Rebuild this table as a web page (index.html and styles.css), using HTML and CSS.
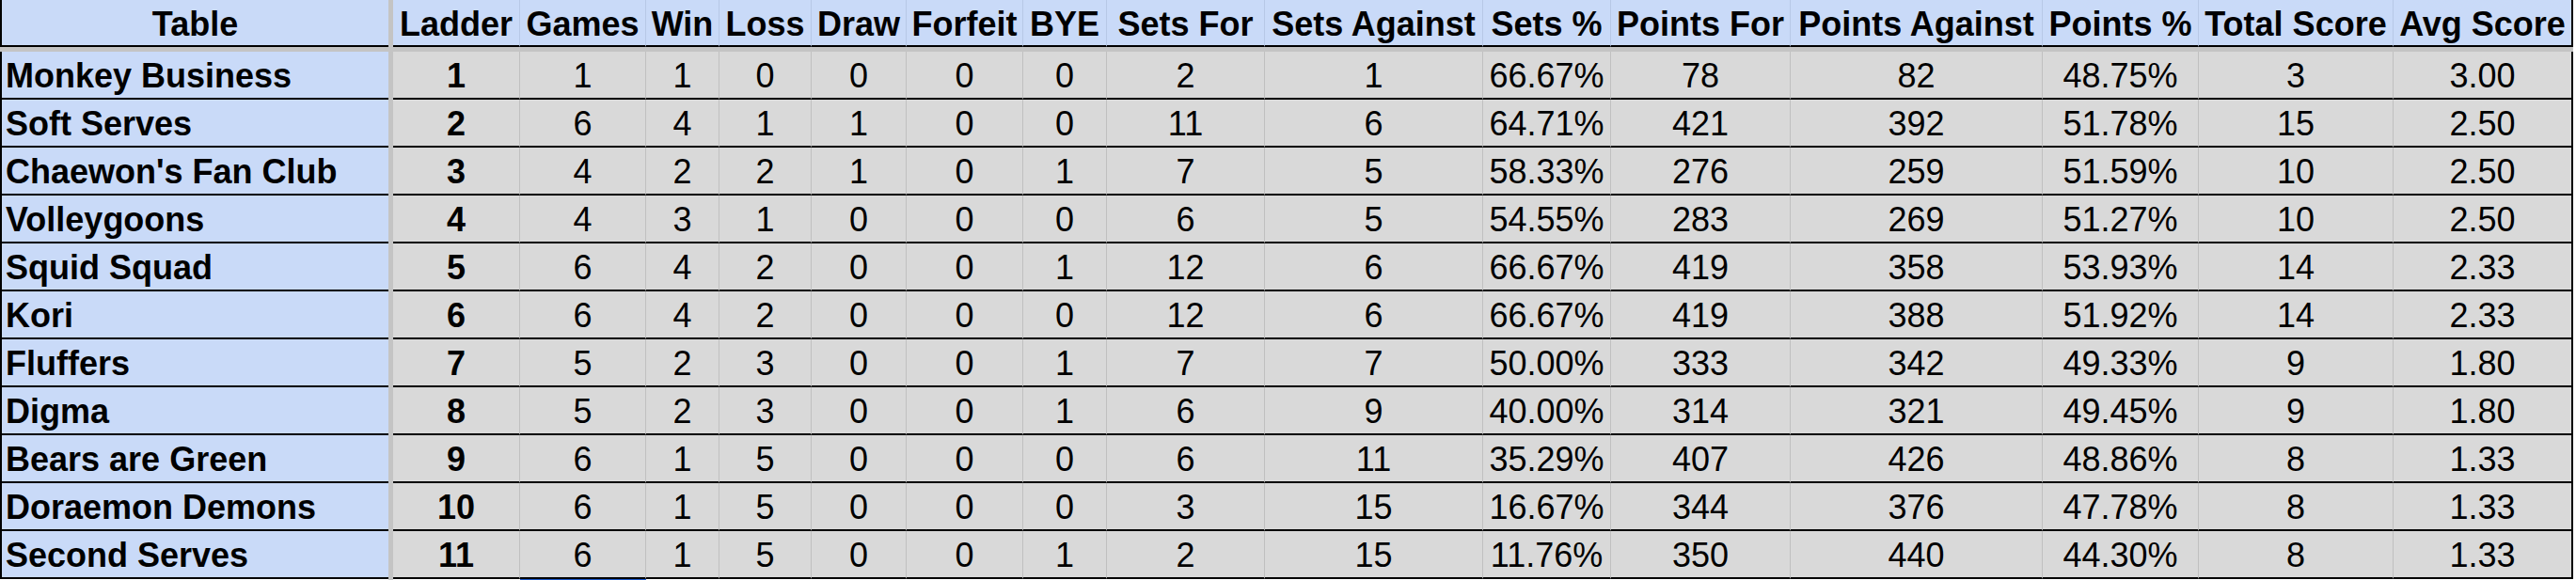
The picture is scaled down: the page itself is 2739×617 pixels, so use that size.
FILE: index.html
```html
<!DOCTYPE html>
<html lang="en">
<head>
<meta charset="utf-8">
<title>Ladder Table</title>
<link rel="stylesheet" href="styles.css">
</head>
<body>
<div class="sheet">
  <div class="hd name">Table</div><div class="vbar"></div>
  <div class="hd">Ladder</div><div class="hd">Games</div><div class="hd">Win</div><div class="hd">Loss</div><div class="hd">Draw</div><div class="hd">Forfeit</div><div class="hd">BYE</div><div class="hd">Sets For</div><div class="hd">Sets Against</div><div class="hd">Sets %</div><div class="hd">Points For</div><div class="hd">Points Against</div><div class="hd">Points %</div><div class="hd">Total Score</div><div class="hd last">Avg Score</div>

  <div class="band"></div>

  <div class="team">Monkey Business</div><div class="vbar"></div>
  <div class="c b">1</div><div class="c">1</div><div class="c">1</div><div class="c">0</div><div class="c">0</div><div class="c">0</div><div class="c">0</div><div class="c">2</div><div class="c">1</div><div class="c">66.67%</div><div class="c">78</div><div class="c">82</div><div class="c">48.75%</div><div class="c">3</div><div class="c last">3.00</div>

  <div class="team">Soft Serves</div><div class="vbar"></div>
  <div class="c b">2</div><div class="c">6</div><div class="c">4</div><div class="c">1</div><div class="c">1</div><div class="c">0</div><div class="c">0</div><div class="c">11</div><div class="c">6</div><div class="c">64.71%</div><div class="c">421</div><div class="c">392</div><div class="c">51.78%</div><div class="c">15</div><div class="c last">2.50</div>

  <div class="team">Chaewon's Fan Club</div><div class="vbar"></div>
  <div class="c b">3</div><div class="c">4</div><div class="c">2</div><div class="c">2</div><div class="c">1</div><div class="c">0</div><div class="c">1</div><div class="c">7</div><div class="c">5</div><div class="c">58.33%</div><div class="c">276</div><div class="c">259</div><div class="c">51.59%</div><div class="c">10</div><div class="c last">2.50</div>

  <div class="team">Volleygoons</div><div class="vbar"></div>
  <div class="c b">4</div><div class="c">4</div><div class="c">3</div><div class="c">1</div><div class="c">0</div><div class="c">0</div><div class="c">0</div><div class="c">6</div><div class="c">5</div><div class="c">54.55%</div><div class="c">283</div><div class="c">269</div><div class="c">51.27%</div><div class="c">10</div><div class="c last">2.50</div>

  <div class="team">Squid Squad</div><div class="vbar"></div>
  <div class="c b">5</div><div class="c">6</div><div class="c">4</div><div class="c">2</div><div class="c">0</div><div class="c">0</div><div class="c">1</div><div class="c">12</div><div class="c">6</div><div class="c">66.67%</div><div class="c">419</div><div class="c">358</div><div class="c">53.93%</div><div class="c">14</div><div class="c last">2.33</div>

  <div class="team">Kori</div><div class="vbar"></div>
  <div class="c b">6</div><div class="c">6</div><div class="c">4</div><div class="c">2</div><div class="c">0</div><div class="c">0</div><div class="c">0</div><div class="c">12</div><div class="c">6</div><div class="c">66.67%</div><div class="c">419</div><div class="c">388</div><div class="c">51.92%</div><div class="c">14</div><div class="c last">2.33</div>

  <div class="team">Fluffers</div><div class="vbar"></div>
  <div class="c b">7</div><div class="c">5</div><div class="c">2</div><div class="c">3</div><div class="c">0</div><div class="c">0</div><div class="c">1</div><div class="c">7</div><div class="c">7</div><div class="c">50.00%</div><div class="c">333</div><div class="c">342</div><div class="c">49.33%</div><div class="c">9</div><div class="c last">1.80</div>

  <div class="team">Digma</div><div class="vbar"></div>
  <div class="c b">8</div><div class="c">5</div><div class="c">2</div><div class="c">3</div><div class="c">0</div><div class="c">0</div><div class="c">1</div><div class="c">6</div><div class="c">9</div><div class="c">40.00%</div><div class="c">314</div><div class="c">321</div><div class="c">49.45%</div><div class="c">9</div><div class="c last">1.80</div>

  <div class="team">Bears are Green</div><div class="vbar"></div>
  <div class="c b">9</div><div class="c">6</div><div class="c">1</div><div class="c">5</div><div class="c">0</div><div class="c">0</div><div class="c">0</div><div class="c">6</div><div class="c">11</div><div class="c">35.29%</div><div class="c">407</div><div class="c">426</div><div class="c">48.86%</div><div class="c">8</div><div class="c last">1.33</div>

  <div class="team">Doraemon Demons</div><div class="vbar"></div>
  <div class="c b">10</div><div class="c">6</div><div class="c">1</div><div class="c">5</div><div class="c">0</div><div class="c">0</div><div class="c">0</div><div class="c">3</div><div class="c">15</div><div class="c">16.67%</div><div class="c">344</div><div class="c">376</div><div class="c">47.78%</div><div class="c">8</div><div class="c last">1.33</div>

  <div class="team">Second Serves</div><div class="vbar"></div>
  <div class="c b">11</div><div class="c">6</div><div class="c">1</div><div class="c">5</div><div class="c">0</div><div class="c">0</div><div class="c">1</div><div class="c">2</div><div class="c">15</div><div class="c">11.76%</div><div class="c">350</div><div class="c">440</div><div class="c">44.30%</div><div class="c">8</div><div class="c last">1.33</div>

  <div class="edge-pad"></div><div class="vbar"></div><div class="edge-pad"></div><div class="sel-edge"></div>
</div>
</body>
</html>
```
FILE: styles.css
```css
html, body {
  margin: 0;
  padding: 0;
  background: #ffffff;
}

.sheet {
  display: grid;
  grid-template-columns: 413px 5px 135px 134px 78px 98px 101px 124px 89px 168px 232px 136px 191px 268px 166px 207px 191px;
  grid-template-rows: 50px 5px repeat(11, 51px) 1px;
  width: 2736px;
  font-family: "Liberation Sans", Arial, Helvetica, sans-serif;
  font-size: 36px;
  color: #000000;
}

.hd, .team, .c {
  box-sizing: border-box;
  display: flex;
  align-items: flex-end;
  justify-content: center;
  line-height: 40px;
  white-space: nowrap;
  overflow: hidden;
  border-bottom: 2px solid #000000;
}

.hd {
  background: #c9daf8;
  font-weight: bold;
  padding-bottom: 2px;
  border-right: 1px solid #b7c8e6;
}

.hd.name {
  border-left: 2px solid #000000;
  border-right: none;
}

.team {
  background: #c9daf8;
  font-weight: bold;
  justify-content: flex-start;
  padding-left: 4px;
  padding-bottom: 3px;
  border-left: 2px solid #000000;
}

.c {
  background: #d9d9d9;
  padding-bottom: 3px;
  border-right: 1px solid #c0c0c0;
}

.c.b {
  font-weight: bold;
}

.hd.last, .c.last {
  border-right: 2px solid #000000;
}

.vbar {
  background: #c4c4c4;
}

.band {
  grid-column: 1 / -1;
  background: #c4c4c4;
}

.edge-pad {
  background: #ffffff;
}

.sel-edge {
  background: #1a56c8;
}
```
